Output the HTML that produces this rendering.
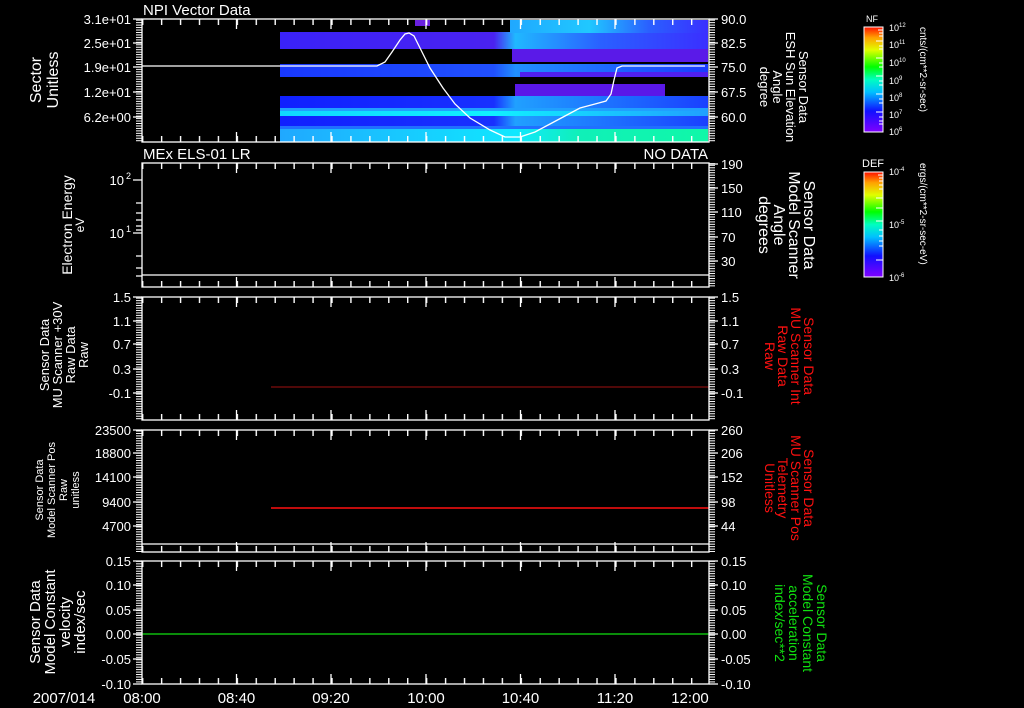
<!DOCTYPE html>
<html><head><meta charset="utf-8">
<style>
html,body{margin:0;padding:0;background:#000;}
svg{display:block}
text{font-family:"Liberation Sans",sans-serif;fill:#fff;}
</style></head>
<body>
<svg width="1024" height="708" viewBox="0 0 1024 708" xmlns="http://www.w3.org/2000/svg">
<defs>
<pattern id="xt" patternUnits="userSpaceOnUse" x="142" y="0" width="18.93" height="708">
<rect x="0" y="0" width="1.4" height="708" fill="#fff"/>
</pattern>
<pattern id="yt" patternUnits="userSpaceOnUse" x="0" y="0" width="10" height="2.46">
<rect x="0" y="0" width="10" height="1" fill="#fff"/>
</pattern>
<linearGradient id="nf" x1="0" y1="1" x2="0" y2="0">
<stop offset="0" stop-color="#8000ff"/><stop offset="0.2" stop-color="#1010ff"/><stop offset="0.38" stop-color="#00c0ff"/><stop offset="0.5" stop-color="#00ffc0"/><stop offset="0.62" stop-color="#00ff00"/><stop offset="0.78" stop-color="#e0ff00"/><stop offset="0.9" stop-color="#ffa000"/><stop offset="1" stop-color="#ff1000"/>
</linearGradient>
<linearGradient id="gA" x1="0" x2="1"><stop offset="0" stop-color="#3a22f8"/><stop offset="0.5" stop-color="#4a22f0"/><stop offset="0.55" stop-color="#20b8ff"/><stop offset="0.75" stop-color="#2a60ff"/><stop offset="1" stop-color="#3a30ff"/></linearGradient>
<linearGradient id="gTop" x1="0" x2="1"><stop offset="0" stop-color="#20a8ff"/><stop offset="0.4" stop-color="#20c8ff"/><stop offset="0.7" stop-color="#2a60ff"/><stop offset="1" stop-color="#3a30ff"/></linearGradient>
<linearGradient id="gB" x1="0" x2="1"><stop offset="0" stop-color="#1838ff"/><stop offset="0.5" stop-color="#2050ff"/><stop offset="0.55" stop-color="#2090ff"/><stop offset="1" stop-color="#1a3cff"/></linearGradient>
<linearGradient id="gC1" x1="0" x2="1"><stop offset="0" stop-color="#1020ff"/><stop offset="0.5" stop-color="#1830ff"/><stop offset="0.55" stop-color="#20a0ff"/><stop offset="1" stop-color="#1a40ff"/></linearGradient>
<linearGradient id="gC2" x1="0" x2="1"><stop offset="0" stop-color="#10d8ff"/><stop offset="0.5" stop-color="#10f0ff"/><stop offset="1" stop-color="#20a0ff"/></linearGradient>
<linearGradient id="gC3" x1="0" x2="1"><stop offset="0" stop-color="#20a8ff"/><stop offset="0.55" stop-color="#10e8ff"/><stop offset="0.7" stop-color="#10f0b8"/><stop offset="1" stop-color="#10f8a8"/></linearGradient>
</defs>

<!-- Spectrogram panel 1 -->
<rect x="280" y="32" width="428" height="17" fill="url(#gA)"/>
<rect x="510" y="20" width="198" height="13" fill="url(#gTop)"/>
<rect x="512" y="49" width="196" height="13" fill="#5a1ae8"/>
<rect x="415" y="20" width="15" height="6" fill="#6a20e0"/>
<rect x="280" y="64" width="428" height="13" fill="url(#gB)"/>
<rect x="520" y="72" width="188" height="5" fill="#5020f0"/>
<rect x="515" y="84" width="150" height="12" fill="#5a18e8"/>
<rect x="280" y="96" width="428" height="12" fill="url(#gC1)"/>
<rect x="280" y="108" width="428" height="3" fill="#20a0ff"/>
<rect x="280" y="111" width="428" height="5" fill="url(#gC2)"/>
<rect x="280" y="116" width="428" height="10" fill="url(#gC1)"/>
<rect x="280" y="126" width="428" height="3" fill="#2070ff"/>
<rect x="280" y="129" width="428" height="13" fill="url(#gC3)"/>
<polyline fill="none" stroke="#fff" stroke-width="1.3" points="142,66 377,66 385,62 392,52 400,40 405,34 409,33 414,36 420,48 430,68 443,88 455,104 470,118 490,130 505,137 520,137 535,132 550,124 565,116 580,108 595,104 606,101 611,94 614,80 617,68 622,66 705,66"/>

<!-- data lines -->
<line x1="142" y1="275" x2="709" y2="275" stroke="#fff" stroke-width="1.3"/>
<line x1="271" y1="387" x2="709" y2="387" stroke="#a01010" stroke-width="1"/>
<line x1="271" y1="508" x2="709" y2="508" stroke="#ff1010" stroke-width="1.5"/>
<line x1="142" y1="544" x2="709" y2="544" stroke="#fff" stroke-width="1.3"/>
<line x1="142" y1="634" x2="709" y2="634" stroke="#10e010" stroke-width="1.3"/>

<!-- panel frames and ticks -->
<g fill="none" stroke="#fff" stroke-width="1.3">
<rect x="142" y="19" width="567" height="123"/>
<rect x="142" y="163" width="567" height="124"/>
<rect x="142" y="297" width="567" height="123"/>
<rect x="142" y="430" width="567" height="122"/>
<rect x="142" y="561" width="567" height="123"/>
</g>
<g>
<rect x="142" y="19" width="567" height="6" fill="url(#xt)"/><rect x="142" y="136" width="567" height="6" fill="url(#xt)"/>
<rect x="142" y="163" width="567" height="6" fill="url(#xt)"/><rect x="142" y="281" width="567" height="6" fill="url(#xt)"/>
<rect x="142" y="297" width="567" height="6" fill="url(#xt)"/><rect x="142" y="414" width="567" height="6" fill="url(#xt)"/>
<rect x="142" y="430" width="567" height="6" fill="url(#xt)"/><rect x="142" y="546" width="567" height="6" fill="url(#xt)"/>
<rect x="142" y="561" width="567" height="6" fill="url(#xt)"/><rect x="142" y="678" width="567" height="6" fill="url(#xt)"/>
</g>
<g stroke="#fff" stroke-width="1.3">
<path d="M236.5 19v10M331 19v10M426 19v10M520.5 19v10M615 19v10M236.5 142v-10M331 142v-10M426 142v-10M520.5 142v-10M615 142v-10"/>
<path d="M236.5 163v10M331 163v10M426 163v10M520.5 163v10M615 163v10M236.5 287v-10M331 287v-10M426 287v-10M520.5 287v-10M615 287v-10"/>
<path d="M236.5 297v10M331 297v10M426 297v10M520.5 297v10M615 297v10M236.5 420v-10M331 420v-10M426 420v-10M520.5 420v-10M615 420v-10"/>
<path d="M236.5 430v10M331 430v10M426 430v10M520.5 430v10M615 430v10M236.5 552v-10M331 552v-10M426 552v-10M520.5 552v-10M615 552v-10"/>
<path d="M236.5 561v10M331 561v10M426 561v10M520.5 561v10M615 561v10M236.5 684v-10M331 684v-10M426 684v-10M520.5 684v-10M615 684v-10"/>
</g>
<!-- y dense ticks -->
<g>
<rect x="136" y="19" width="6" height="123" fill="url(#yt)"/><rect x="709" y="19" width="6" height="123" fill="url(#yt)"/>
<rect x="709" y="163" width="6" height="124" fill="url(#yt)"/>
<rect x="136" y="297" width="6" height="123" fill="url(#yt)"/><rect x="709" y="297" width="6" height="123" fill="url(#yt)"/>
<rect x="136" y="430" width="6" height="122" fill="url(#yt)"/><rect x="709" y="430" width="6" height="122" fill="url(#yt)"/>
<rect x="136" y="561" width="6" height="123" fill="url(#yt)"/><rect x="709" y="561" width="6" height="123" fill="url(#yt)"/>
</g>
<g stroke="#fff" stroke-width="1.3">
<path d="M133 19h9M133 43h9M133 67h9M133 92h9M133 117h9M709 19h9M709 43h9M709 67h9M709 92h9M709 117h9"/>
<path d="M133 180h9M133 233h9M136 203h6M136 213h6M136 220h6M136 226h6M136 230h6M136 256h6M136 268h6M136 276h6M709 164h9M709 188h9M709 212h9M709 237h9M709 261h9"/>
<path d="M133 297h9M133 321h9M133 344h9M133 369h9M133 393h9M709 297h9M709 321h9M709 344h9M709 369h9M709 393h9"/>
<path d="M133 430h9M133 453h9M133 477h9M133 502h9M133 526h9M709 430h9M709 453h9M709 477h9M709 502h9M709 526h9"/>
<path d="M133 561h9M133 585h9M133 610h9M133 634h9M133 659h9M133 684h9M709 561h9M709 585h9M709 610h9M709 634h9M709 659h9M709 684h9"/>
</g>

<!-- titles -->
<text x="143" y="15" font-size="15">NPI Vector Data</text>
<text x="143" y="159" font-size="15">MEx ELS-01 LR</text>
<text x="708" y="159" font-size="15" text-anchor="end">NO DATA</text>

<!-- left tick labels -->
<g font-size="13" text-anchor="end">
<text x="131" y="24">3.1e+01</text><text x="131" y="48">2.5e+01</text><text x="131" y="72">1.9e+01</text><text x="131" y="97">1.2e+01</text><text x="131" y="122">6.2e+00</text>
<text x="124" y="185">10</text><text x="131" y="179" font-size="9">2</text><text x="124" y="238">10</text><text x="131" y="232" font-size="9">1</text>
<text x="131" y="302">1.5</text><text x="131" y="326">1.1</text><text x="131" y="349">0.7</text><text x="131" y="374">0.3</text><text x="131" y="398">-0.1</text>
<text x="131" y="435">23500</text><text x="131" y="458">18800</text><text x="131" y="482">14100</text><text x="131" y="507">9400</text><text x="131" y="531">4700</text>
<text x="131" y="566">0.15</text><text x="131" y="590">0.10</text><text x="131" y="615">0.05</text><text x="131" y="639">0.00</text><text x="131" y="664">-0.05</text><text x="131" y="689">-0.10</text>
</g>
<g font-size="13">
<text x="721" y="24">90.0</text><text x="721" y="48">82.5</text><text x="721" y="72">75.0</text><text x="721" y="97">67.5</text><text x="721" y="122">60.0</text>
<text x="721" y="169">190</text><text x="721" y="193">150</text><text x="721" y="217">110</text><text x="721" y="242">70</text><text x="721" y="266">30</text>
<text x="721" y="302">1.5</text><text x="721" y="326">1.1</text><text x="721" y="349">0.7</text><text x="721" y="374">0.3</text><text x="721" y="398">-0.1</text>
<text x="721" y="435">260</text><text x="721" y="458">206</text><text x="721" y="482">152</text><text x="721" y="507">98</text><text x="721" y="531">44</text>
<text x="721" y="566">0.15</text><text x="721" y="590">0.10</text><text x="721" y="615">0.05</text><text x="721" y="639">0.00</text><text x="721" y="664">-0.05</text><text x="721" y="689">-0.10</text>
</g>

<!-- bottom time labels -->
<g font-size="15" text-anchor="middle">
<text x="64" y="703">2007/014</text>
<text x="142" y="703">08:00</text><text x="236.5" y="703">08:40</text><text x="331" y="703">09:20</text><text x="426" y="703">10:00</text><text x="520.5" y="703">10:40</text><text x="615" y="703">11:20</text><text x="690" y="703">12:00</text>
</g>

<!-- left rotated titles -->
<g text-anchor="middle">
<text transform="translate(41,80) rotate(-90)" font-size="16">Sector</text>
<text transform="translate(58,80) rotate(-90)" font-size="16">Unitless</text>
<text transform="translate(72,225) rotate(-90)" font-size="14">Electron Energy</text>
<text transform="translate(84,225) rotate(-90)" font-size="12">eV</text>
<text transform="translate(49,355) rotate(-90)" font-size="13">Sensor Data</text>
<text transform="translate(62,355) rotate(-90)" font-size="13">MU Scanner +30V</text>
<text transform="translate(75,355) rotate(-90)" font-size="13">Raw Data</text>
<text transform="translate(88,355) rotate(-90)" font-size="13">Raw</text>
<text transform="translate(43,490) rotate(-90)" font-size="11">Sensor Data</text>
<text transform="translate(55,490) rotate(-90)" font-size="11">Model Scanner Pos</text>
<text transform="translate(67,490) rotate(-90)" font-size="11">Raw</text>
<text transform="translate(79,490) rotate(-90)" font-size="11">unitless</text>
<text transform="translate(40,622) rotate(-90)" font-size="15">Sensor Data</text>
<text transform="translate(55,622) rotate(-90)" font-size="15">Model Constant</text>
<text transform="translate(70,622) rotate(-90)" font-size="15">velocity</text>
<text transform="translate(85,622) rotate(-90)" font-size="15">index/sec</text>
</g>
<!-- right rotated titles -->
<g text-anchor="middle">
<text transform="translate(799,87) rotate(90)" font-size="13">Sensor Data</text>
<text transform="translate(786,87) rotate(90)" font-size="13">ESH Sun Elevation</text>
<text transform="translate(773,87) rotate(90)" font-size="13">Angle</text>
<text transform="translate(760,87) rotate(90)" font-size="13">degree</text>
<text transform="translate(804,225) rotate(90)" font-size="16">Sensor Data</text>
<text transform="translate(789,225) rotate(90)" font-size="16">Model Scanner</text>
<text transform="translate(774,225) rotate(90)" font-size="16">Angle</text>
<text transform="translate(759,225) rotate(90)" font-size="16">degrees</text>
<text transform="translate(804,356) rotate(90)" font-size="14" style="fill:#ff1010">Sensor Data</text>
<text transform="translate(791,356) rotate(90)" font-size="14" style="fill:#ff1010">MU Scanner Int</text>
<text transform="translate(778,356) rotate(90)" font-size="14" style="fill:#ff1010">Raw Data</text>
<text transform="translate(765,356) rotate(90)" font-size="14" style="fill:#ff1010">Raw</text>
<text transform="translate(804,488) rotate(90)" font-size="14" style="fill:#ff1010">Sensor Data</text>
<text transform="translate(791,488) rotate(90)" font-size="14" style="fill:#ff1010">MU Scanner Pos</text>
<text transform="translate(778,488) rotate(90)" font-size="14" style="fill:#ff1010">Telemetry</text>
<text transform="translate(765,488) rotate(90)" font-size="14" style="fill:#ff1010">Unitless</text>
<text transform="translate(817,623) rotate(90)" font-size="14" style="fill:#10e010">Sensor Data</text>
<text transform="translate(803,623) rotate(90)" font-size="14" style="fill:#10e010">Model Constant</text>
<text transform="translate(789,623) rotate(90)" font-size="14" style="fill:#10e010">acceleration</text>
<text transform="translate(775,623) rotate(90)" font-size="14" style="fill:#10e010">index/sec**2</text>
</g>

<!-- colorbars -->
<rect x="864" y="27" width="19" height="105" fill="url(#nf)" stroke="#fff" stroke-width="1"/>
<rect x="864" y="172" width="19" height="105" fill="url(#nf)" stroke="#fff" stroke-width="1"/>
<g stroke="#fff" stroke-width="1">
<path d="M878 30h5M879 33h4M879 36h4M876 41h7M879 46h4M879 49h4M876 58h7M879 63h4M879 67h4M876 76h7M879 81h4M879 85h4M876 94h7M879 99h4M879 103h4M876 112h7M879 117h4M879 121h4M879 124h4"/>
<path d="M878 175h5M879 178h4M879 181h4M879 185h4M879 189h4M876 198h7M876 208h7M876 221h7M879 230h4M879 236h4M879 241h4M879 246h4M876 260h7"/>
</g>
<g font-size="9">
<text x="866" y="22" font-size="9">NF</text>
<text x="862" y="167" font-size="11">DEF</text>
<text x="889" y="31">10<tspan font-size="6" dy="-4">12</tspan></text>
<text x="889" y="48">10<tspan font-size="6" dy="-4">11</tspan></text>
<text x="889" y="66">10<tspan font-size="6" dy="-4">10</tspan></text>
<text x="889" y="84">10<tspan font-size="6" dy="-4">9</tspan></text>
<text x="889" y="101">10<tspan font-size="6" dy="-4">8</tspan></text>
<text x="889" y="118">10<tspan font-size="6" dy="-4">7</tspan></text>
<text x="889" y="135">10<tspan font-size="6" dy="-4">6</tspan></text>
<text x="889" y="175">10<tspan font-size="6" dy="-4">-4</tspan></text>
<text x="889" y="228">10<tspan font-size="6" dy="-4">-5</tspan></text>
<text x="889" y="281">10<tspan font-size="6" dy="-4">-6</tspan></text>
<text transform="translate(920,27) rotate(90)" font-size="10">cnts/(cm**2-sr-sec)</text>
<text transform="translate(920,163) rotate(90)" font-size="10">ergs/(cm**2-sr-sec-eV)</text>
</g>
</svg>
</body></html>
